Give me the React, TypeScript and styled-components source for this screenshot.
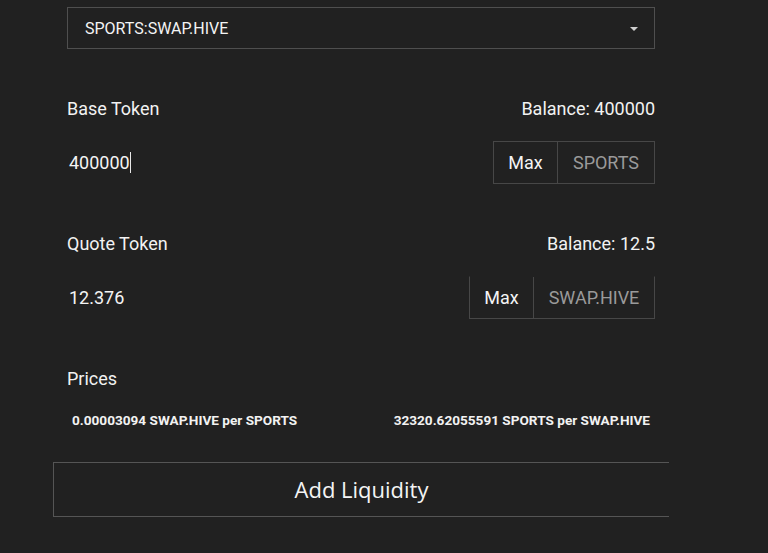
import * as React from 'react';
import styled, { createGlobalStyle } from 'styled-components';

const FONT = 'Roboto, "Noto Sans", sans-serif';

const GlobalStyle = createGlobalStyle`
  html, body {
    margin: 0;
    padding: 0;
    background: #212121;
  }
  body {
    font-family: ${FONT};
    color: #f2f2f2;
  }
`;

const Page = styled.div`
  width: 768px;
  height: 553px;
  overflow: hidden;
  background: #212121;
  display: flex;
  flex-direction: column;
  padding: 7px 0 0 67px;
  box-sizing: border-box;
`;

const Form = styled.div`
  width: 588px;
  display: flex;
  flex-direction: column;
`;

const Select = styled.div`
  height: 42px;
  box-sizing: border-box;
  border: 1px solid #4f4f4f;
  display: flex;
  align-items: center;
  justify-content: space-between;
  padding: 0 16px 0 17px;
  font-size: 16px;
  color: #f4f4f4;
`;

const Caret = styled.span`
  width: 0;
  height: 0;
  border-left: 4px solid transparent;
  border-right: 4px solid transparent;
  border-top: 4px solid #d0d0d0;
  margin-top: 2px;
`;

const LabelRow = styled.div<{ $top: number }>`
  display: flex;
  justify-content: space-between;
  align-items: center;
  margin-top: ${({ $top }) => $top}px;
  height: 20px;
  font-size: 18px;
  color: #f2f2f2;
`;

const InputRow = styled.div<{ $top: number }>`
  display: flex;
  justify-content: space-between;
  align-items: stretch;
  margin-top: ${({ $top }) => $top}px;
  height: 43px;
`;

const Value = styled.div`
  display: flex;
  align-items: center;
  padding-left: 2px;
  font-size: 18px;
  color: #f4f4f4;
`;

const TextCaret = styled.span`
  display: inline-block;
  width: 1px;
  height: 21px;
  background: #e8e8e8;
`;

const Group = styled.div<{ $open?: boolean }>`
  display: flex;
  border: 1px solid #474747;
  border-top-color: ${({ $open }) => ($open ? 'transparent' : '#474747')};
`;

const Addon = styled.div<{ $width: number; $muted?: boolean }>`
  width: ${({ $width }) => $width}px;
  display: flex;
  align-items: center;
  justify-content: center;
  font-size: 18px;
  color: ${({ $muted }) => ($muted ? '#9a9a9a' : '#f4f4f4')};
  & + & {
    border-left: 1px solid #474747;
  }
`;

const Prices = styled.div`
  display: flex;
  justify-content: space-between;
  margin-top: 24px;
  padding: 0 5px;
  font-size: 13.6px;
  font-weight: 700;
  color: #f2f2f2;
`;

const SubmitButton = styled.button`
  margin: 34px 0 0 -14px;
  width: 616px;
  height: 55px;
  box-sizing: border-box;
  background: transparent;
  border: 1px solid #555;
  border-right: none;
  color: #f4f4f4;
  font-family: "Open Sans", ${FONT};
  font-size: 22px;
  padding: 0 0 2px 0;
  cursor: pointer;
`;

export default function App() {
  return (
    <>
      <GlobalStyle />
      <Page>
        <Form>
          <Select>
            <span>SPORTS:SWAP.HIVE</span>
            <Caret />
          </Select>

          <LabelRow $top={49}>
            <span>Base Token</span>
            <span>Balance: 400000</span>
          </LabelRow>
          <InputRow $top={23}>
            <Value>
              400000
              <TextCaret />
            </Value>
            <Group>
              <Addon $width={63}>Max</Addon>
              <Addon $width={96} $muted>
                SPORTS
              </Addon>
            </Group>
          </InputRow>

          <LabelRow $top={49}>
            <span>Quote Token</span>
            <span>Balance: 12.5</span>
          </LabelRow>
          <InputRow $top={23}>
            <Value>12.376</Value>
            <Group $open>
              <Addon $width={63}>Max</Addon>
              <Addon $width={120} $muted>
                SWAP.HIVE
              </Addon>
            </Group>
          </InputRow>

          <LabelRow $top={49}>
            <span>Prices</span>
          </LabelRow>
          <Prices>
            <span>0.00003094 SWAP.HIVE per SPORTS</span>
            <span>32320.62055591 SPORTS per SWAP.HIVE</span>
          </Prices>

          <SubmitButton>Add Liquidity</SubmitButton>
        </Form>
      </Page>
    </>
  );
}
